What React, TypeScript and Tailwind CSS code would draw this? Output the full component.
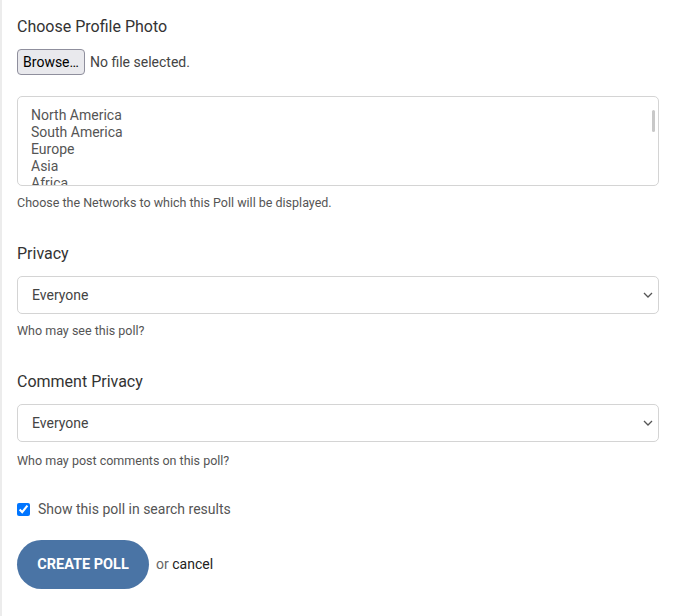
const REGIONS = ["North America", "South America", "Europe", "Asia", "Africa", "Oceania"];

function Chevron() {
  return (
    <svg className="absolute right-[5px] top-1/2 -translate-y-1/2 w-[10px] h-[6px]" viewBox="0 0 10 6" fill="none" stroke="#555" strokeWidth={1.3}>
      <path d="M1 1l4 4 4-4" />
    </svg>
  );
}

function FakeSelect({ value }: { value: string }) {
  return (
    <div className="relative h-[38px] rounded-[5px] border border-[#d4d4d4] bg-white pl-[14px] flex items-center text-[14px] text-[#444]">
      {value}
      <Chevron />
    </div>
  );
}

export default function App() {
  return (
    <div className="flex min-h-screen bg-white" style={{ fontFamily: "Roboto, 'Liberation Sans', sans-serif" }}>
      <div className="w-[2px] shrink-0 bg-[#ececec]" />
      <main className="flex-1 pl-[15px] pr-[19px] pb-8">
        {/* photo */}
        <h3 className="pt-[17px] text-[16px] leading-[19px] text-[#333]">Choose Profile Photo</h3>
        <div className="mt-[13px] flex items-center gap-[5px]">
          <button className="h-[26px] w-[68px] rounded-[4px] border border-[#8f8f9d] bg-[#e9e9ed] text-[14px] text-black">Browse…</button>
          <span className="text-[14px] text-[#444]">No file selected.</span>
        </div>

        {/* networks */}
        <div className="relative mt-[21px] h-[90px] overflow-hidden rounded-[5px] border border-[#d4d4d4] pl-[13px] pt-[10px]">
          {REGIONS.map((r) => (
            <div key={r} className="text-[14px] leading-[17px] text-[#555]">{r}</div>
          ))}
          <div className="absolute right-[3px] top-[13px] h-[22px] w-[3px] rounded-sm bg-[#c8c8c8]" />
        </div>
        <p className="mt-[9px] text-[12.5px] leading-[15px] text-[#555]">Choose the Networks to which this Poll will be displayed.</p>

        {/* privacy */}
        <h3 className="mt-[34px] text-[16px] leading-[19px] text-[#333]">Privacy</h3>
        <div className="mt-[13px]"><FakeSelect value="Everyone" /></div>
        <p className="mt-[9px] text-[12.5px] leading-[15px] text-[#555]">Who may see this poll?</p>

        {/* comment privacy */}
        <h3 className="mt-[34px] text-[16px] leading-[19px] text-[#333]">Comment Privacy</h3>
        <div className="mt-[13px]"><FakeSelect value="Everyone" /></div>
        <p className="mt-[11px] text-[12.5px] leading-[15px] text-[#555]">Who may post comments on this poll?</p>

        {/* search */}
        <label className="mt-[33px] flex items-center gap-[8px] text-[14px] leading-[17px] text-[#555]">
          <input type="checkbox" defaultChecked className="m-0 h-[13px] w-[13px]" />
          Show this poll in search results
        </label>

        <div className="mt-[22px] flex items-center gap-[7px]">
          <button className="h-[49px] w-[132px] rounded-full bg-[#4a74a5] text-[14.5px] font-bold text-white">CREATE POLL</button>
          <span className="text-[14px] text-[#666]">or <a className="text-[#222]">cancel</a></span>
        </div>
      </main>
    </div>
  );
}
